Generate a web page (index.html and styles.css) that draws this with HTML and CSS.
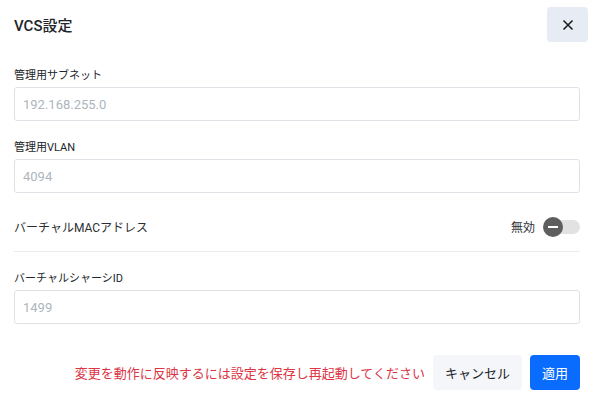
FILE: index.html
```html
<!DOCTYPE html>
<html lang="ja">
<head>
<meta charset="utf-8">
<link rel="stylesheet" href="styles.css">
</head>
<body>
<div class="modal">
  <div class="header">
    <h1 class="title">VCS設定</h1>
    <button class="close" aria-label="閉じる">
      <svg width="12" height="12" viewBox="0 0 12 12"><path d="M1.5 1.5L10.5 10.5M10.5 1.5L1.5 10.5" stroke="#1f1f1f" stroke-width="1.6" fill="none"/></svg>
    </button>
  </div>
  <div class="body">
    <div class="field">
      <label class="label">管理用サブネット</label>
      <input class="input" placeholder="192.168.255.0">
    </div>
    <div class="field">
      <label class="label">管理用VLAN</label>
      <input class="input" placeholder="4094">
    </div>
    <div class="toggle-row">
      <span class="toggle-label">バーチャルMACアドレス</span>
      <div class="toggle-wrap">
        <span class="toggle-state">無効</span>
        <span class="switch"><span class="knob"></span></span>
      </div>
    </div>
    <div class="field">
      <label class="label">バーチャルシャーシID</label>
      <input class="input" placeholder="1499">
    </div>
  </div>
  <div class="footer">
    <span class="notice">変更を動作に反映するには設定を保存し再起動してください</span>
    <button class="btn btn-cancel">キャンセル</button>
    <button class="btn btn-apply">適用</button>
  </div>
</div>
</body>
</html>
```

FILE: styles.css
```css
* { box-sizing: border-box; }
html, body { margin: 0; padding: 0; background: #fff; }
body {
  font-family: Roboto, "Noto Sans CJK JP", sans-serif;
  color: #212529;
  width: 594px;
  height: 406px;
}
.modal { padding: 7px 14px 0 14px; }
.header {
  display: flex;
  align-items: center;
  justify-content: space-between;
  height: 35px;
  margin-right: -8px;
}
.title {
  margin: 0;
  font-size: 15px;
  font-weight: 500;
  color: #212529;
}
.close {
  width: 41px;
  height: 35px;
  border: none;
  border-radius: 4px;
  background: #e6ebf4;
  display: flex;
  align-items: center;
  justify-content: center;
  padding: 0;
}
.body { padding-top: 24px; padding-bottom: 1px; }
.field { display: flex; flex-direction: column; margin-bottom: 17px; }
.label {
  font-size: 11px;
  line-height: 16px;
  height: 18px;
  padding-top: 2px;
  margin-bottom: 3px;
  color: #212529;
}
.input {
  height: 34px;
  border: 1px solid #dee2e6;
  border-radius: 3px;
  padding: 0 8px;
  font-family: Roboto, "Noto Sans CJK JP", sans-serif;
  font-size: 13px;
  color: #212529;
  outline: none;
}
.input::placeholder { color: #adb5bd; }
.toggle-row {
  display: flex;
  align-items: center;
  justify-content: space-between;
  height: 42px;
  margin-top: 6px;
  border-bottom: 1px solid #e9ecef;
  padding-bottom: 8px;
  margin-bottom: 17px;
}
.toggle-label { font-size: 12px; color: #2b2f33; }
.toggle-wrap { display: flex; align-items: center; gap: 7px; }
.toggle-state { font-size: 12px; color: #2b2f33; }
.switch {
  position: relative;
  width: 36px;
  height: 14px;
  border-radius: 7px;
  background: #e2e2e2;
  display: inline-block;
  margin-left: 2px;
}
.knob {
  position: absolute;
  left: -1px;
  top: -3px;
  width: 20px;
  height: 20px;
  border-radius: 50%;
  background: #5e5e5e;
}
.knob::after {
  content: "";
  position: absolute;
  left: 5px;
  top: 9px;
  width: 10px;
  height: 2px;
  background: #fff;
}
.footer {
  display: flex;
  align-items: center;
  justify-content: flex-end;
  margin-top: 13px;
  gap: 8px;
}
.notice {
  font-size: 13px;
  color: #dc3545;
}
.btn {
  height: 35px;
  border: none;
  border-radius: 4px;
  font-family: Roboto, "Noto Sans CJK JP", sans-serif;
  font-size: 13px;
  padding: 0 12px;
}
.btn-cancel { background: #f4f6f9; color: #212529; }
.btn-apply { background: #0a6cff; color: #fff; }
```
